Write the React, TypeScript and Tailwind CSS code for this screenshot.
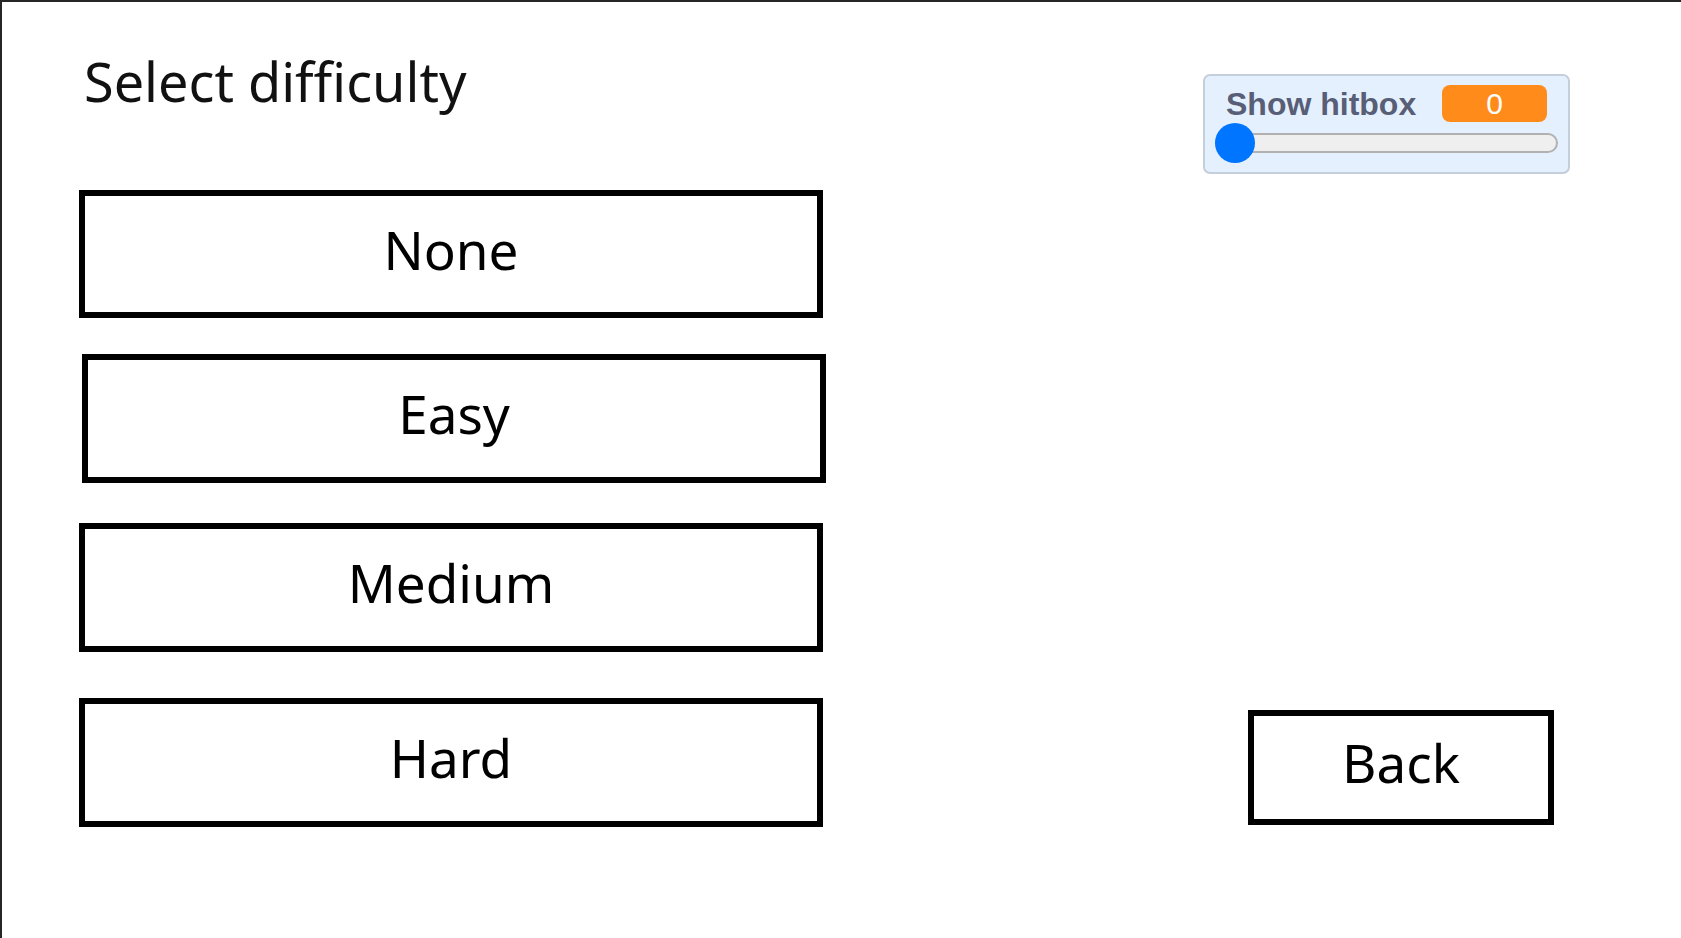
import React from "react";

const noto = { fontFamily: '"Noto Sans", "Open Sans", sans-serif' };

function Btn({ label, className }: { label: string; className: string }) {
  return (
    <div
      className={`flex items-center justify-center border-[6px] border-black bg-white text-black text-[53px] leading-[53px] pb-[10px] ${className}`}
      style={noto}
    >
      {label}
    </div>
  );
}

export default function App() {
  return (
    <div className="w-[1681px] h-[938px] bg-white border-t-2 border-l-2 border-[#262626] flex overflow-hidden">
      <div className="flex flex-col pl-[77px] pt-[52px]">
        <div className="text-[54px] leading-[54px] h-[54px] text-[#111] pl-[5px]" style={noto}>
          Select difficulty
        </div>
        <Btn label="None" className="mt-[82px] w-[744px] h-[128px]" />
        <Btn label="Easy" className="mt-[36px] ml-[3px] w-[744px] h-[129px]" />
        <Btn label="Medium" className="mt-[40px] w-[744px] h-[129px]" />
        <Btn label="Hard" className="mt-[46px] w-[744px] h-[129px]" />
      </div>
      <div className="ml-auto flex flex-col items-end pr-[111px] pt-[72px]">
        <div className="w-[367px] h-[100px] rounded-[7px] border-2 border-[#c5cedb] bg-[#e5f0ff] flex flex-col">
          <div className="mt-[9px] h-[37px] px-[21px] flex items-center justify-between">
            <span
              className="text-[32px] font-bold text-[#575e75] leading-none"
              style={{ fontFamily: '"Liberation Sans", Arial, sans-serif' }}
            >
              Show hitbox
            </span>
            <span
              className="w-[105px] h-[37px] rounded-[8px] bg-[#ff8c1a] text-white text-[30px] leading-none flex items-center justify-center"
              style={{ fontFamily: '"Liberation Sans", Arial, sans-serif' }}
            >
              0
            </span>
          </div>
          <div className="relative mt-[1px] mx-[10px] h-[40px] flex items-center">
            <div className="w-full h-[20px] rounded-full border-2 border-[#b1b1b1] bg-[#efefef]" />
            <div className="absolute left-0 top-0 w-[40px] h-[40px] rounded-full bg-[#0075ff]" />
          </div>
        </div>
        <div
          className="mt-[536px] mr-[16px] w-[306px] h-[115px] border-[6px] border-black bg-white flex items-center justify-center text-[53px] leading-[53px] pb-[10px] text-black"
          style={noto}
        >
          Back
        </div>
      </div>
    </div>
  );
}
